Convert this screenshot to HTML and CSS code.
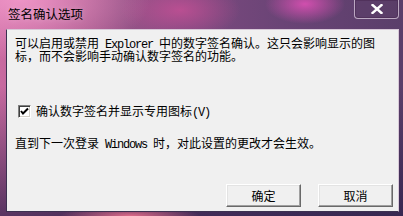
FILE: index.html
```html
<!DOCTYPE html>
<html lang="zh-CN">
<head>
<meta charset="utf-8">
<title>签名确认选项</title>
<link rel="stylesheet" href="styles.css">
</head>
<body>
<div class="window">
  <div class="titlebar">
    <span class="title">签名确认选项</span>
    <div class="close">
      <svg width="12" height="10" viewBox="0 0 12 10"><path d="M1.5 1 L10.5 9 M10.5 1 L1.5 9" stroke="#fff" stroke-width="2.4" stroke-linecap="square"/></svg>
    </div>
  </div>
  <div class="client">
    <p class="desc"><span class="line">可以启用或禁用<span class="lat"> Explorer </span>中的数字签名确认。这只会影响显示的图</span><span class="line">标，而不会影响手动确认数字签名的功能。</span></p>
    <label class="check">
      <span class="box">
        <svg width="13" height="13" viewBox="0 0 13 13"><path d="M3 6 L5 8.5 L10 3.5" fill="none" stroke="#000" stroke-width="2"/></svg>
      </span>
      <span class="check-label">确认数字签名并显示专用图标<span class="lat">(V)</span></span>
    </label>
    <p class="note">直到下一次登录<span class="lat"> Windows </span>时，对此设置的更改才会生效。</p>
    <div class="buttons">
      <button class="btn">确定</button>
      <button class="btn">取消</button>
    </div>
  </div>
</div>
</body>
</html>
```
FILE: styles.css
```css
html, body {
  margin: 0;
  padding: 0;
}
body {
  width: 403px;
  height: 216px;
  overflow: hidden;
  font-family: "Noto Sans CJK SC", "Liberation Sans", sans-serif;
  font-size: 12px;
  color: #000;
}
.window {
  width: 403px;
  height: 216px;
  display: flex;
  flex-direction: column;
  box-sizing: border-box;
  padding: 0 4px 4px 6px;
  background:
    radial-gradient(ellipse 40px 20px at 305px 4px, rgba(220, 80, 180, 0.9), rgba(220, 80, 180, 0) 100%),
    radial-gradient(ellipse 70px 10px at 130px 216px, rgba(230, 110, 140, 0.95), rgba(230, 110, 140, 0) 100%),
    radial-gradient(ellipse 130px 60px at 20px 0px, rgba(240, 150, 200, 0.95), rgba(240, 150, 200, 0) 100%),
    radial-gradient(ellipse 60px 30px at 180px 10px, rgba(200, 80, 150, 0.8), rgba(200, 80, 150, 0) 100%),
    linear-gradient(180deg, rgba(0,0,0,0) 0%, rgba(0,0,0,0) 40%, rgba(40, 30, 70, 0.7) 100%),
    linear-gradient(90deg, #c86aa0 0%, #a85a8c 20%, #7e4a80 45%, #6a4476 70%, #5a3e6a 100%);
}
.titlebar {
  height: 29px;
  display: flex;
  align-items: flex-start;
  flex-shrink: 0;
}
.title {
  padding: 6px 0 0 2px;
  line-height: 15px;
  font-size: 12.5px;
  color: #000;
  text-shadow: 0 0 6px rgba(255, 255, 255, 0.35);
}
.close {
  margin-left: auto;
  width: 45px;
  height: 19px;
  box-sizing: border-box;
  border: 1px solid rgba(220, 205, 225, 0.75);
  border-top: none;
  border-radius: 0 0 4px 4px;
  background: rgba(90, 60, 100, 0.35);
  box-shadow: inset 0 0 0 1px rgba(60, 30, 70, 0.35);
  display: flex;
  align-items: center;
  justify-content: center;
}
.close svg {
  display: block;
  margin-top: -1px;
}
.client {
  flex: 1;
  background: #f0f0f0;
  border: 1px solid #3c3050;
  border-top-color: #d8c8d8;
  border-right-color: #d8c8d8;
  display: flex;
  flex-direction: column;
  padding: 6px 5px 4px 8px;
}
.desc {
  margin: 0;
  display: flex;
  flex-direction: column;
}
.line {
  display: block;
  height: 13px;
  line-height: 13px;
  white-space: nowrap;
  overflow: visible;
}
.desc .line + .line {
  margin-top: 0;
}
.note {
  margin: 0;
  line-height: 13px;
  white-space: nowrap;
}
.lat {
  font-family: "Liberation Mono", monospace;
  font-size: 12px;
  letter-spacing: -1.2px;
}
.check {
  display: flex;
  align-items: center;
  gap: 5px;
  margin-top: 43px;
  padding-left: 3px;
  height: 13px;
  line-height: 13px;
}
.box {
  width: 13px;
  height: 13px;
  box-sizing: border-box;
  background: #fff;
  border: 1px solid;
  border-color: #808080 #fff #fff #808080;
  box-shadow: inset 1px 1px 0 #404040, inset -1px -1px 0 #d4d0c8;
  position: relative;
}
.box svg {
  position: absolute;
  left: -1px;
  top: -1px;
}
.note {
  margin-top: 18px;
}
.buttons {
  margin-top: auto;
  display: flex;
  justify-content: flex-end;
  gap: 17px;
}
.btn {
  width: 75px;
  height: 23px;
  box-sizing: border-box;
  font-family: "Noto Sans CJK SC", sans-serif;
  font-size: 12px;
  line-height: 13px;
  color: #000;
  background: #f0f0f0;
  border: 1px solid;
  border-color: #fff #696969 #696969 #fff;
  box-shadow: inset -1px -1px 0 #a0a0a0, inset 1px 1px 0 #e3e3e3;
  padding: 0;
}
```
